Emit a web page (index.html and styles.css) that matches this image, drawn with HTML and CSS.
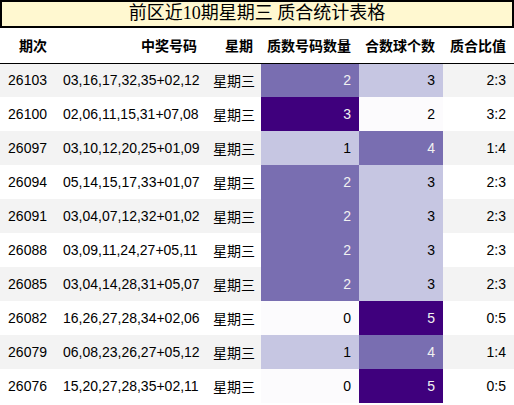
FILE: index.html
```html
<!DOCTYPE html>
<html lang="zh">
<head>
<meta charset="utf-8">
<link rel="stylesheet" href="styles.css">
</head>
<body>
<div class="page">
  <div class="title">前区近10期星期三 质合统计表格</div>
  <table class="stats">
    <colgroup>
      <col class="c1"><col class="c2"><col class="c3"><col class="c4"><col class="c5"><col class="c6">
    </colgroup>
    <thead>
      <tr><th>期次</th><th>中奖号码</th><th>星期</th><th>质数号码数量</th><th>合数球个数</th><th>质合比值</th></tr>
    </thead>
    <tbody>
      <tr><td>26103</td><td>03,16,17,32,35+02,12</td><td>星期三</td><td class="v2">2</td><td class="v1">3</td><td>2:3</td></tr>
      <tr><td>26100</td><td>02,06,11,15,31+07,08</td><td>星期三</td><td class="v3">3</td><td class="v0">2</td><td>3:2</td></tr>
      <tr><td>26097</td><td>03,10,12,20,25+01,09</td><td>星期三</td><td class="v1">1</td><td class="v2">4</td><td>1:4</td></tr>
      <tr><td>26094</td><td>05,14,15,17,33+01,07</td><td>星期三</td><td class="v2">2</td><td class="v1">3</td><td>2:3</td></tr>
      <tr><td>26091</td><td>03,04,07,12,32+01,02</td><td>星期三</td><td class="v2">2</td><td class="v1">3</td><td>2:3</td></tr>
      <tr><td>26088</td><td>03,09,11,24,27+05,11</td><td>星期三</td><td class="v2">2</td><td class="v1">3</td><td>2:3</td></tr>
      <tr><td>26085</td><td>03,04,14,28,31+05,07</td><td>星期三</td><td class="v2">2</td><td class="v1">3</td><td>2:3</td></tr>
      <tr><td>26082</td><td>16,26,27,28,34+02,06</td><td>星期三</td><td class="v0">0</td><td class="v3">5</td><td>0:5</td></tr>
      <tr><td>26079</td><td>06,08,23,26,27+05,12</td><td>星期三</td><td class="v1">1</td><td class="v2">4</td><td>1:4</td></tr>
      <tr><td>26076</td><td>15,20,27,28,35+02,11</td><td>星期三</td><td class="v0">0</td><td class="v3">5</td><td>0:5</td></tr>
    </tbody>
  </table>
</div>
</body>
</html>
```

FILE: styles.css
```css
* { box-sizing: border-box; }
html, body { margin: 0; padding: 0; background: #ffffff; }
.page { width: 514px; }
.title {
  height: 28px;
  border: 2px solid #000;
  background: #fff8d0;
  font-family: "Liberation Serif", "Noto Sans CJK SC", serif;
  font-size: 18px;
  line-height: 23px;
  text-align: center;
  color: #000;
}
.stats {
  width: 514px;
  table-layout: fixed;
  border-collapse: collapse;
  font-family: "Liberation Sans", "Noto Sans CJK SC", sans-serif;
  font-size: 14px;
  color: #000;
}
.c1 { width: 55px; }
.c2 { width: 150px; }
.c3 { width: 56px; }
.c4 { width: 98px; }
.c5 { width: 84px; }
.c6 { width: 71px; }
.stats th {
  height: 35px;
  padding: 0 8px 0 0;
  text-align: right;
  font-weight: bold;
  white-space: nowrap;
  border-bottom: 1px solid #000;
  background: #fff;
}
.stats td {
  height: 34px;
  padding: 0 8px;
  text-align: right;
  white-space: nowrap;
}
.stats tbody tr:nth-child(odd) td { background: #f3f3f3; }
.stats tbody tr:nth-child(even) td { background: #ffffff; }
.stats tbody tr td.v0 { background: #fcfbfd; color: #000; }
.stats tbody tr td.v1 { background: #c6c6e2; color: #000; }
.stats tbody tr td.v2 { background: #796eb1; color: #f1f1f1; }
.stats tbody tr td.v3 { background: #3f007d; color: #f1f1f1; }
```
